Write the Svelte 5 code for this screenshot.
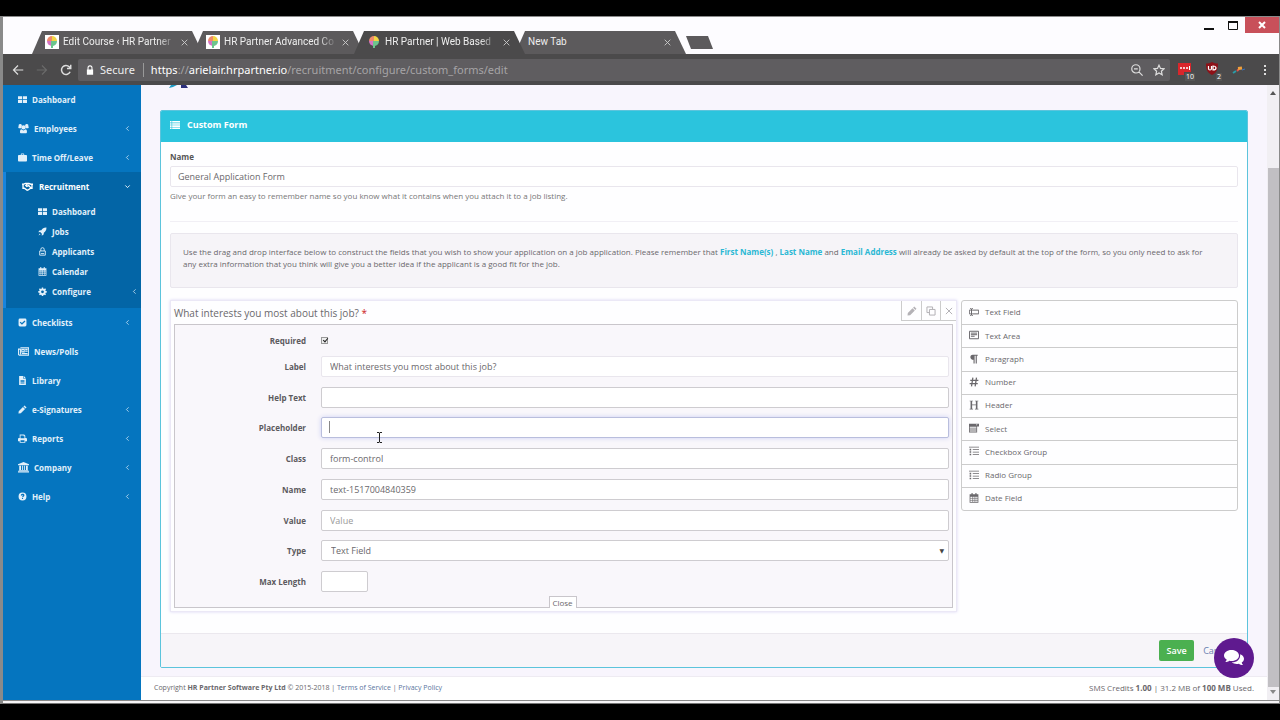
<script>
  const icons = {
    grid: { fill: 'M0 2h7.300v5.400H0zM8.700 2H16v5.400H8.700zM0 8.800h7.300V14H0zM8.700 8.800H16V14H8.700z' },
    users: { size: 'wide', fill: 'M8 3.400a3 3 0 1 1 0 6 3 3 0 0 1 0-6zM3.400 1.400a2.200 2.200 0 0 1 1.900 3.400 4.500 4.500 0 0 0-.4 3H1.400C.2 7.800 0 4.600 1.200 4.700a2.200 2.200 0 0 1 2.200-3.300zM12.600 1.400a2.200 2.200 0 0 1 2.200 3.300c1.200-.1 1 3.100-.2 3.100h-3.500a4.500 4.500 0 0 0-.4-3 2.200 2.200 0 0 1 1.900-3.400zM4.800 9.200a4.500 4.500 0 0 0 6.400 0c2 .2 2.600 5.800.8 5.800H4c-1.800 0-1.200-5.600.8-5.800z' },
    briefcase: { fill: 'M5 3.500V2.200C5 1.500 5.500 1 6.200 1h3.600c.7 0 1.200.5 1.200 1.200v1.300h3.500A1.500 1.500 0 0 1 16 5v8.500a1.500 1.500 0 0 1-1.500 1.500h-13A1.500 1.500 0 0 1 0 13.500V5a1.500 1.500 0 0 1 1.500-1.500zM6.400 3.500h3.200V2.400H6.400z' },
    handshake: { size: 'widest', weight: 2, stroke: 'M0 4.500h2.500l2.500-1h3l2 .2 3 1H16M1.500 5v5.500h2l4 3 1.500-.5 3.500-2.500h2V5M8 4L5.500 6.500 7 8l2.500-1.500L13 10' },
    rocket: { fill: 'M15 1c-4.500-.2-7 1.600-9 4.600L2.500 6 .5 9.400l3.400-.3 3 3L6.600 15.500 10 13.500l.4-3.500c3-2 4.800-4.500 4.600-9zM3 11.500l1.500 1.500L1 15z' },
    lock: { stroke: 'M3 7h10v7.500H3zM5 7V4.200a3 3 0 0 1 6 0V7M5 11.700h6' },
    calendar: { fill: 'M4 0h1.800v2h4.400V0H12v2h3v13.500H1V2h3zM2.300 6v2.200h2.400V6zM5.700 6v2.200h2V6zM8.700 6v2.200h2V6zM11.600 6v2.200h2V6zM2.300 9.200v2.200h2.400V9.200zM5.700 9.200v2.200h2V9.200zM8.700 9.200v2.200h2V9.200zM11.600 9.200v2.200h2V9.200zM2.300 12.400v1.900h2.400v-1.900zM5.700 12.400v1.900h2v-1.900zM8.700 12.400v1.900h2v-1.900zM11.600 12.400v1.900h2v-1.900z' },
    gear: { fill: 'M6.800 1h2.400l.4 2 1.300.6 1.700-1.200 1.700 1.700-1.200 1.700.6 1.200 2.100.4v2.300l-2.100.4-.6 1.300 1.200 1.700-1.700 1.700-1.700-1.200-1.300.6-.4 2H6.800l-.4-2-1.300-.6-1.700 1.200-1.700-1.700 1.200-1.700-.6-1.300L.2 9.700V7.400L2.300 7l.6-1.200-1.200-1.700 1.700-1.700 1.700 1.200L6.400 3zM8 6a2.500 2.500 0 1 0 0 5 2.500 2.500 0 0 0 0-5z' },
    check: { fill: 'M3.500 1h9A2.500 2.500 0 0 1 15 3.500v9a2.500 2.500 0 0 1-2.500 2.500h-9A2.500 2.500 0 0 1 1 12.500v-9A2.500 2.500 0 0 1 3.500 1zM3 8l4 4.200L13.200 6l-1.600-1.600L7 9 4.600 6.500z' },
    news: { size: 'wide', stroke: 'M3.500 2.700h12v10.600H2A1.500 1.500 0 0 1 .6 12V4.500h2.900M3.500 4.500V12M5.500 5h3.500v3.500H5.500zM10.500 5h3.500M10.500 7.500h3.500M5.500 10.800h8.500' },
    file: { fill: 'M2 0h7.500v5H14v11H2zM10.500 0L14 4h-3.500zM4.500 7v1.400h7V7zM4.500 9.500v1.400h7V9.500zM4.500 12v1.400h7V12z' },
    pencil: { fill: 'M11.600.8l3.600 3.600-1.800 1.900-3.700-3.700zM8.800 3.500l3.700 3.700L5 14.700l-4.200.6.500-4.300z' },
    print: { fill: 'M3 1h8l2 2v4h1c1.200 0 2 .8 2 2v4h-3v2.500H3V13H0V9c0-1.200.8-2 2-2h1zM4.500 2.500v5h7V4H10V2.500zM4.500 11v3h7v-3z' },
    bank: { size: 'wide', fill: 'M8 0l8 3.400v1.300H0V3.400zM1.800 5.600h2.600v6H6v-6h1.400v6h1.400v-6H10v6h1.600v-6h2.600v6h.8v1.200H1v-1.200h.8zM0 13.600h16V15.300H0z' },
    help: { fill: 'M8 1a7 7 0 1 1 0 14A7 7 0 0 1 8 1zM4.800 5.800l1.700.8C7.300 4.800 9.600 5.700 8.600 7 8 7.500 7 7.900 7 9.500h2c0-1 2.500-1.600 2.400-3.700C11.200 2.500 6.200 2.300 4.800 5.800zM7 10.500v2h2v-2z' },
    list: { fill: 'M0 1.500h2.500v2.500H0zM3.500 1.500H16v2.500H3.500zM0 5h2.500v2.500H0zM3.500 5H16v2.500H3.500zM0 8.500h2.500v2.500H0zM3.500 8.500H16v2.500H3.500zM0 12h2.500v2.500H0zM3.500 12H16v2.500H3.500z' },
    copy: { stroke: 'M5.500 5.500h9v9h-9zM10.500 5.500v-4h-9v9h4' },
    close: { stroke: 'M3 3l10 10M13 3L3 13' },
    textfield: { stroke: 'M5 5h10.500v6H5M.5 5H3M.5 11H3M.5 5v6M2 2.500h1.300l.7.700v9.600l-.7.700H2M6 2.500H4.700L4 3.200M4 12.800l.7.700H6' },
    textarea: { stroke: 'M.7 2h14.600v12H.7zM3 5h10M3 7.500h10M3 10h6' },
    paragraph: { fill: 'M6 1h8v1.800h-1.500V15h-1.800V2.800H9V15H7.200V9.200C.8 9.200.8 1 6 1z' },
    number: { weight: 2, stroke: 'M6.200 1L4 15M12 1L9.800 15M2 5.500h13M1 10.500h13' },
    header: { fill: 'M1 1h5.500v1H5v5h6V2H9.500V1H15v1h-1.500v12H15v1H9.500v-1H11V8.300H5V14h1.500v1H1v-1h1.500V2H1z' },
    select: { fill: 'M0 1h16v4.500h-3V15H0zM1.200 6v1.500h10.600V6zM1.200 8.900v1.500h10.600V8.900zM1.200 11.900v1.700h10.600v-1.700zM11 2.300l1.300 1.800 1.300-1.800z' },
    checks: { fill: 'M0 1h16v1.300H0zM1 4.500h2.500V7H1zM6 5h10v1.200H6zM1 8.300h2.500v2.500H1zM6 9h10v1.200H6zM1 12.200h2.500v2.500H1zM6 13h10v1.200H6z' },
    chevL: { stroke: 'M10.500 3L5.500 8l5 5' },
    chevD: { weight: 2, stroke: 'M3 5.500l5 5 5-5' },
    back: { stroke: 'M15 8H2M8 2L2 8l6 6' },
    forward: { stroke: 'M1 8h13M8 2l6 6-6 6' },
    reload: { weight: 2, stroke: 'M13.500 10.300A6 6 0 1 1 12.300 3.700L14 5.500M14.300 1v5H9.300' },
    padlock: { fill: 'M3 7h1V4.500a4 4 0 0 1 8 0V7h1v8.500H3zM5.700 7h4.600V4.500a2.300 2.300 0 0 0-4.600 0z' },
    zoom: { stroke: 'M6.500 1a5.500 5.500 0 1 1 0 11 5.500 5.500 0 0 1 0-11zM10.500 10.500L15.500 15.500M4 6.500h5' },
    star: { stroke: 'M8 1.500l2 4.400 4.800.5-3.600 3.200 1 4.800L8 12l-4.200 2.400 1-4.800L1.200 6.400 6 5.900z' }
  };

  const tabs = [
    { title: 'Edit Course ‹ HR Partner', icon: true, tile: true },
    { title: 'HR Partner Advanced Co', icon: true, tile: true },
    { title: 'HR Partner | Web Based', icon: true, active: true },
    { title: 'New Tab' }
  ];

  const nav = [
    { icon: 'grid', label: 'Dashboard' },
    { icon: 'users', label: 'Employees', more: true },
    { icon: 'briefcase', label: 'Time Off/Leave', more: true },
    {
      icon: 'handshake', label: 'Recruitment', open: true,
      children: [
        { icon: 'grid', label: 'Dashboard' },
        { icon: 'rocket', label: 'Jobs' },
        { icon: 'lock', label: 'Applicants' },
        { icon: 'calendar', label: 'Calendar' },
        { icon: 'gear', label: 'Configure', more: true }
      ]
    },
    { icon: 'check', label: 'Checklists', more: true },
    { icon: 'news', label: 'News/Polls' },
    { icon: 'file', label: 'Library' },
    { icon: 'pencil', label: 'e-Signatures', more: true },
    { icon: 'print', label: 'Reports', more: true },
    { icon: 'bank', label: 'Company', more: true },
    { icon: 'help', label: 'Help', more: true }
  ];

  const fields = [
    { id: 'label', label: 'Label', value: 'What interests you most about this job?', soft: true },
    { id: 'help', label: 'Help Text', value: '' },
    { id: 'placeholder', label: 'Placeholder', value: '', active: true },
    { id: 'class', label: 'Class', value: 'form-control' },
    { id: 'fname', label: 'Name', value: 'text-1517004840359' },
    { id: 'value', label: 'Value', value: '', placeholder: 'Value' },
    { id: 'type', label: 'Type', select: true },
    { id: 'max', label: 'Max Length', value: '', short: true }
  ];

  const tools = [
    ['textfield', 'Text Field'],
    ['textarea', 'Text Area'],
    ['paragraph', 'Paragraph'],
    ['number', 'Number'],
    ['header', 'Header'],
    ['select', 'Select'],
    ['checks', 'Checkbox Group'],
    ['checks', 'Radio Group'],
    ['calendar', 'Date Field']
  ];
</script>

{#snippet icon(name)}
  <svg class="icon {icons[name].size ?? ''}" viewBox="0 0 16 16" aria-hidden="true">
    {#if icons[name].fill}
      <path d={icons[name].fill} fill="currentColor" fill-rule="evenodd" />
    {:else}
      <path d={icons[name].stroke} fill="none" stroke="currentColor" stroke-width={icons[name].weight ?? 1.6} />
    {/if}
  </svg>
{/snippet}

{#snippet favicon()}
  <svg class="fav" viewBox="0 0 14 14" aria-hidden="true">
    <path d="M7 1a5 5 0 0 0-5 5h5z" fill="#ef8a6c" />
    <path d="M7 1a5 5 0 0 1 5 5H7z" fill="#f2d544" />
    <path d="M2 6a5 5 0 0 0 5 5V6z" fill="#d673c4" />
    <path d="M12 6a5 5 0 0 1-4 4.900V13H6V6z" fill="#6cc58d" />
  </svg>
{/snippet}

<div class="screen">
  <div class="window">
    <header class="titlebar">
      <div class="tabs">
        {#each tabs as tab}
          <div class="tab" class:active={tab.active}>
            {#if tab.icon}<span class="tile" class:white={tab.tile}>{@render favicon()}</span>{/if}
            <span class="tab-title">{tab.title}</span>
            <button class="tab-close" aria-label="Close tab">{@render icon('close')}</button>
          </div>
        {/each}
        <button class="new-tab" aria-label="Open a new tab"></button>
      </div>
      <div class="win-buttons">
        <button aria-label="Minimize"><svg viewBox="0 0 10 10"><path d="M0 9h10" stroke="#111" stroke-width="2" /></svg></button>
        <button aria-label="Maximize"><svg viewBox="0 0 10 10"><path d="M.5 1v8.500h9V1" fill="none" stroke="#111" /><path d="M0 2h10" stroke="#111" stroke-width="2" /></svg></button>
        <button class="win-close" aria-label="Close window"><svg viewBox="0 0 10 10"><path d="M2 2l6 6M8 2L2 8" stroke="#fff" stroke-width="2" /></svg></button>
      </div>
    </header>

    <div class="toolbar">
      <button class="tool" aria-label="Back">{@render icon('back')}</button>
      <button class="tool dim" aria-label="Forward">{@render icon('forward')}</button>
      <button class="tool" aria-label="Reload">{@render icon('reload')}</button>
      <div class="omnibox">
        <span class="lock">{@render icon('padlock')}</span>
        <span class="secure">Secure</span>
        <span class="url"><b>https</b>://<b>arielair.hrpartner.io</b>/recruitment/configure/custom_forms/edit</span>
        <button class="tool" aria-label="Zoom">{@render icon('zoom')}</button>
        <button class="tool" aria-label="Bookmark this page">{@render icon('star')}</button>
      </div>
      <button class="ext" aria-label="Password extension">
        <svg viewBox="0 0 18 16"><path d="M2 1h13v9H8v3H2z" fill="#d9262b" /><g fill="#fff"><circle cx="5" cy="6" r="1" /><circle cx="8" cy="6" r="1" /><circle cx="11" cy="6" r="1" /><path d="M13 4h1v4h-1z" /></g></svg>
        <span class="count">10</span>
      </button>
      <button class="ext" aria-label="Content blocker">
        <svg viewBox="0 0 18 16"><path d="M9 0c2 1.500 4 1.500 6 1.500C15 7 14 10.500 9 13 4 10.500 3 7 3 1.500 5 1.500 7 1.500 9 0z" fill="#8e1118" /><path d="M5.500 4v2.500a1.500 1.500 0 0 0 3 0V4M10 4v4c4 0 4-4 0-4z" fill="none" stroke="#fff" stroke-width="1.200" /></svg>
        <span class="count">2</span>
      </button>
      <button class="ext" aria-label="Site extension">
        <svg viewBox="0 0 18 16"><path d="M3 11l3-2" stroke="#2b9ca8" stroke-width="2" /><path d="M7 9l2-2" stroke="#e2574c" stroke-width="2" /><path d="M8 6.500l4-.5" stroke="#f0a03c" stroke-width="3" /><path d="M12 8l3-1" stroke="#3274c8" stroke-width="1" /></svg>
      </button>
      <button class="menu" aria-label="Menu"><i></i><i></i><i></i></button>
    </div>

    <div class="page">
      <nav class="sidebar">
        {#each nav as item}
          <div class:open={item.open}>
            <a class="nav-item" href="#top">
              {@render icon(item.icon)}<span>{item.label}</span>
              {#if item.more || item.open}<span class="chev">{@render icon(item.open ? 'chevD' : 'chevL')}</span>{/if}
            </a>
            {#if item.children}
              <div class="sub">
                {#each item.children as child}
                  <a class="nav-item" href="#top">
                    {@render icon(child.icon)}<span>{child.label}</span>
                    {#if child.more}<span class="chev">{@render icon('chevL')}</span>{/if}
                  </a>
                {/each}
              </div>
            {/if}
          </div>
        {/each}
      </nav>

      <main>
        <div class="brand">
          <svg viewBox="0 0 20 3" aria-hidden="true"><path d="M0 3l2-3h6L4 2z" fill="#1d9bc4" /><path d="M12 0h5l2 3h-7z" fill="#2c2f7c" /></svg>
        </div>

        <section class="panel">
          <h1>{@render icon('list')}Custom Form</h1>
          <div class="body">
            <label class="name-label" for="form-name">Name</label>
            <input id="form-name" class="soft" value="General Application Form" />
            <p class="hint">Give your form an easy to remember name so you know what it contains when you attach it to a job listing.</p>
            <hr />
            <p class="well">
              Use the drag and drop interface below to construct the fields that you wish to show your application on a job application. Please remember that <b>First Name(s)</b> , <b>Last Name</b> and <b>Email Address</b> will already be asked by default at the top of the form, so you only need to ask for any extra information that you think will give you a better idea if the applicant is a good fit for the job.
            </p>

            <div class="builder">
              <div class="stage">
                <div class="stage-head">
                  <span class="question">What interests you most about this job? <em>*</em></span>
                  <div class="actions">
                    <button aria-label="Edit">{@render icon('pencil')}</button>
                    <button aria-label="Duplicate">{@render icon('copy')}</button>
                    <button aria-label="Remove">{@render icon('close')}</button>
                  </div>
                </div>
                <div class="editor">
                  <div class="row required">
                    <label for="required">Required</label>
                    <input id="required" type="checkbox" checked />
                  </div>
                  <div class="rows">
                    {#each fields as f}
                      <div class="row">
                        <label for={f.id}>{f.label}</label>
                        <div class="control">
                          {#if f.select}
                            <select id={f.id}><option>Text Field</option></select>
                            <span class="arrow">▼</span>
                          {:else}
                            <input id={f.id} class:soft={f.soft} class:focus={f.active} class:short={f.short} value={f.value} placeholder={f.placeholder} />
                            {#if f.active}
                              <span class="caret"></span>
                              <svg class="pointer" viewBox="0 0 7 11" aria-hidden="true"><path d="M1 .5h2l.5.5.5-.5h2M1 10.500h2l.5-.5.5.5h2M3.500 1v9" fill="none" stroke="#222" /></svg>
                            {/if}
                          {/if}
                        </div>
                      </div>
                    {/each}
                  </div>
                  <button class="close-btn">Close</button>
                </div>
              </div>

              <ul class="toolbox">
                {#each tools as [name, label]}
                  <li>{@render icon(name)}<span>{label}</span></li>
                {/each}
              </ul>
            </div>
          </div>
          <div class="panel-foot">
            <button class="save">Save</button>
            <a href="#cancel">Cancel</a>
          </div>
        </section>

        <footer>
          <span class="copyright">Copyright <b>HR Partner Software Pty Ltd</b> © 2015-2018 | <a href="#terms">Terms of Service</a> | <a href="#privacy">Privacy Policy</a></span>
          <span class="usage">SMS Credits <b>1.00</b> | 31.2 MB of <b>100 MB</b> Used.</span>
        </footer>

        <button class="chat" aria-label="Chat">
          <svg viewBox="0 0 20 16" aria-hidden="true">
            <path d="M7.500 0C12 0 15 2.500 15 5.500S12 11 7.500 11c-.8 0-1.500-.1-2.200-.3C4 11.700 2.700 12 1.300 12c.8-.8 1.300-1.500 1.400-2.500C1 8.500 0 7.200 0 5.500 0 2.500 3 0 7.500 0z" fill="#fff" />
            <path d="M16.200 4.200C18.500 5 20 6.800 20 8.800c0 1.500-.8 2.900-2.300 3.800.1 1 .6 1.700 1.300 2.500-1.500 0-2.800-.4-4-1.400-2.600.6-5.300.2-7.300-1.400 5 .2 8.800-2.800 8.500-8.100z" fill="#fff" />
          </svg>
        </button>
      </main>

      <div class="scrollbar"><span class="up"></span><span class="thumb"></span><span class="down"></span></div>
    </div>
  </div>
</div>

<style>
  :global(body) { margin: 0; background: #000; }
  * { box-sizing: border-box; }
  button { border: 0; padding: 0; margin: 0; background: none; font: inherit; color: inherit; display: flex; align-items: center; justify-content: center; }
  a { text-decoration: none; color: inherit; }
  svg { display: block; flex: none; }
  .icon { width: 10px; height: 10px; }

  .screen { min-height: 100vh; padding: 16px 0; display: flex; font-family: "Open Sans", "Noto Sans", sans-serif; font-size: 9px; color: #6a686c; }
  .window { flex: 1; min-width: 0; display: flex; flex-direction: column; border: solid #8a8a8a; border-width: 1px 1px 1px 3px; border-bottom-color: #777; padding-bottom: 2px; background: #f6f4f6; }

  .titlebar { height: 37px; display: flex; justify-content: space-between; align-items: flex-start; background: #fdfcff; }
  .tabs { display: flex; padding: 14px 0 0 29px; }
  .tab { width: 171px; height: 23px; margin-right: -10px; padding: 0 14px 1px 13px; display: flex; align-items: center; gap: 4px; background: #5c5a5c; color: #eee; clip-path: polygon(10px 0, 160px 0, 171px 100%, 0 100%); }
  .tab.active { background: #4b4a4b; z-index: 1; }
  .tile { display: flex; width: 14px; height: 14px; }
  .tile.white { background: #fff; }
  .fav { width: 14px; height: 14px; }
  .tab-title { flex: 1; min-width: 0; overflow: hidden; white-space: nowrap; font: 10px/14px Roboto, sans-serif; }
  .tile + .tab-title { mask-image: linear-gradient(90deg, #000 84%, transparent); }
  .tab-close { color: #ccc; }
  .tab-close .icon { width: 9px; height: 9px; }
  .new-tab { width: 27px; height: 13px; margin: 5px 0 0 10px; background: #5c5a5c; clip-path: polygon(0 0, 22px 0, 27px 100%, 5px 100%); }
  .win-buttons { display: flex; }
  .win-buttons button { width: 24px; height: 16px; }
  .win-buttons svg { width: 10px; height: 10px; }
  .win-buttons .win-close { width: 34px; background: #c8505a; }

  .toolbar { height: 31px; display: flex; align-items: center; background: #4b4a4b; color: #ddd; padding: 0 1px 0 3px; }
  .tool { width: 24px; height: 24px; }
  .tool .icon { width: 12px; height: 12px; }
  .dim { color: #6a6a6a; }
  .omnibox { flex: 1; min-width: 0; height: 22px; margin-right: 1px; padding-left: 7px; display: flex; align-items: center; background: #5f5d60; border-radius: 2px; font: 11px "Noto Sans", sans-serif; }
  .omnibox .lock { padding-right: 5px; color: #fff; }
  .omnibox .tool { width: 22px; }
  .secure { padding-right: 8px; border-right: 1px solid #999; line-height: 14px; color: #eee; }
  .url { flex: 1; min-width: 0; padding-left: 7px; overflow: hidden; white-space: nowrap; color: #a6a4a6; }
  .url b { color: #fff; font-weight: 400; }
  .ext { position: relative; width: 27px; height: 22px; }
  .ext svg { width: 18px; height: 16px; }
  .count { position: absolute; right: 3px; bottom: 0; background: #555; color: #fff; font-size: 7px; line-height: 8px; padding: 0 1px; }
  .menu { width: 26px; flex-direction: column; gap: 2px; }
  .menu i { width: 2px; height: 2px; background: #ddd; }

  .page { flex: 1; display: flex; min-height: 0; border-bottom: 1px solid #888; background: #f8f5fd; }
  .sidebar { width: 138px; flex: none; background: #0575bf; color: #e2f0fa; font-size: 8px; font-weight: 700; }
  .sidebar .icon { width: 9px; height: 9px; }
  .sidebar .wide { width: 11px; height: 11px; }
  .sidebar .widest { width: 13px; height: 11px; }
  .nav-item { height: 29px; display: flex; align-items: center; gap: 5px; padding: 0 10px 0 15px; }
  .sidebar .chev { margin-left: auto; }
  .sidebar .chev .icon { width: 7px; height: 7px; }
  .open { background: #0365a6; color: #fff; border-left: 3px solid #1884dc; padding-bottom: 7px; }
  .sub { color: #e2f0fa; }
  .sub .nav-item { height: 20px; padding: 0 3px 0 32px; }

  main { position: relative; flex: 1; min-width: 0; display: flex; flex-direction: column; }
  .brand { height: 25px; padding-left: 28px; }
  .brand svg { width: 20px; height: 3px; }
  .panel { margin: 0 19px 8px; border: 1px solid #5cc4dc; border-radius: 2px; background: #fefeff; overflow: hidden; }
  h1 { margin: 0; height: 31px; padding: 0 9px 4px; display: flex; align-items: center; gap: 7px; background: #2bc4dd; color: #fff; font-size: 9px; font-weight: 700; }
  .body { padding: 8px 9px 21px; }
  .name-label { display: block; line-height: 14px; margin-bottom: 2px; font-size: 8px; font-weight: 700; color: #555; }
  input, select { width: 100%; height: 21px; border: 1px solid #ceccd0; border-radius: 2px; background: #fff; padding: 0 8px; margin: 0; font: 9px "Open Sans", sans-serif; color: #6a686c; outline: 0; display: block; }
  .body > input { padding: 0 7px; }
  input::placeholder { color: #999; }
  input.soft { border-color: #e9e6ed; }
  input.short { width: 47px; }
  input.focus { border-color: #b9bedd; box-shadow: 0 0 5px #cdd0f2; }
  .hint { margin: 2px 0 0; line-height: 14px; font-size: 8px; color: #777; }
  hr { margin: 18px 0 11px; border: 0; border-top: 1px solid #f1eff5; }
  .well { margin: 0 0 12px; min-height: 55px; padding: 12px 22px 12px 12px; border: 1px solid #e9e6ed; border-radius: 2px; background: #f6f4f8; line-height: 12px; font-size: 8px; }
  .well b { color: #2bb8d4; }

  .builder { display: flex; align-items: flex-start; gap: 4px; }
  .stage { flex: 1; min-width: 0; padding: 0 3px 3px; border: 1px solid #ebe8f6; box-shadow: 0 0 3px #dcd8f4; }
  .stage-head { height: 23px; display: flex; justify-content: space-between; align-items: center; }
  .question { font-size: 10px; }
  em { color: #c22; font-style: normal; }
  .actions { align-self: flex-start; margin-right: -3px; display: flex; border: solid #ccc; border-width: 0 0 1px 1px; color: #b4b2b6; }
  .actions button { width: 19px; height: 19px; }
  .actions button:last-child { width: 16px; }
  .actions button + button { border-left: 1px solid #ccc; }
  .editor { position: relative; border: 1px solid #c9c6cb; background: #f9f7fb; padding: 0 3px 10px 0; }
  .row { display: flex; align-items: center; gap: 15px; }
  .row label { width: 131px; flex: none; text-align: right; font-size: 8px; font-weight: 700; color: #5c5a5e; }
  .required { height: 26px; padding-top: 4px; }
  .required input { appearance: none; width: 7px; height: 7px; padding: 0; border-color: #999; border-radius: 0; background: #eee; position: relative; }
  .required input::after { content: ""; position: absolute; left: 2px; top: -1px; width: 2px; height: 4px; border: solid #222; border-width: 0 1px 1px 0; transform: rotate(40deg); }
  .rows { display: grid; grid-auto-rows: 1fr; min-height: 246px; }
  .control { position: relative; flex: 1; min-width: 0; }
  .control select { appearance: none; padding-left: 9px; }
  .arrow { position: absolute; right: 5px; top: 6px; font: 6px/10px "DejaVu Sans", sans-serif; color: #444; pointer-events: none; }
  .caret { position: absolute; left: 8px; top: 4px; width: 1px; height: 12px; background: #888; }
  .pointer { position: absolute; left: 55px; top: 15px; width: 7px; height: 11px; }
  .close-btn { position: absolute; left: 50%; bottom: -1px; width: 28px; height: 12px; margin-left: -15px; border: 1px solid #c9c6cb; border-bottom: 0; background: #fff; font-size: 8px; }
  .toolbox { width: 277px; flex: none; min-height: 211px; margin: 0; padding: 0; list-style: none; display: grid; grid-auto-rows: 1fr; border: 1px solid #ccc; border-radius: 3px; font-size: 8px; }
  .toolbox li { display: flex; align-items: center; gap: 6px; padding: 0 7px 2px; }
  .toolbox li + li { border-top: 1px solid #ccc; }

  .panel-foot { height: 34px; display: flex; align-items: center; justify-content: flex-end; gap: 9px; padding-right: 16px; border-top: 1px solid #ebe8ee; background: #f7f5f9; color: #6a7fb0; }
  .save { width: 35px; height: 21px; border-radius: 2px; background: #4bb050; color: #fff; font-weight: 600; }
  footer { flex: 1; min-height: 23px; display: flex; align-items: center; justify-content: space-between; padding: 0 13px 2px; border-top: 1px solid #eeebf2; background: #fff; }
  .copyright { font-size: 7px; }
  .usage { font-size: 8px; }
  .copyright a { color: #5a75a0; }
  .chat { position: absolute; right: 13px; bottom: 22px; width: 40px; height: 40px; border-radius: 50%; background: #5f1a8f; }
  .chat svg { width: 20px; height: 16px; }

  .scrollbar { width: 12px; flex: none; display: flex; flex-direction: column; align-items: center; background: #f1eff3; }
  .thumb { flex: 1; width: 11px; margin: 73px 0 3px; background: #c1bfc3; }
  .up, .down { border: solid transparent; border-width: 0 3px; }
  .up { border-bottom: 4px solid #555; margin-top: 6px; }
  .down { border-top: 4px solid #888; margin-bottom: 6px; }
</style>
